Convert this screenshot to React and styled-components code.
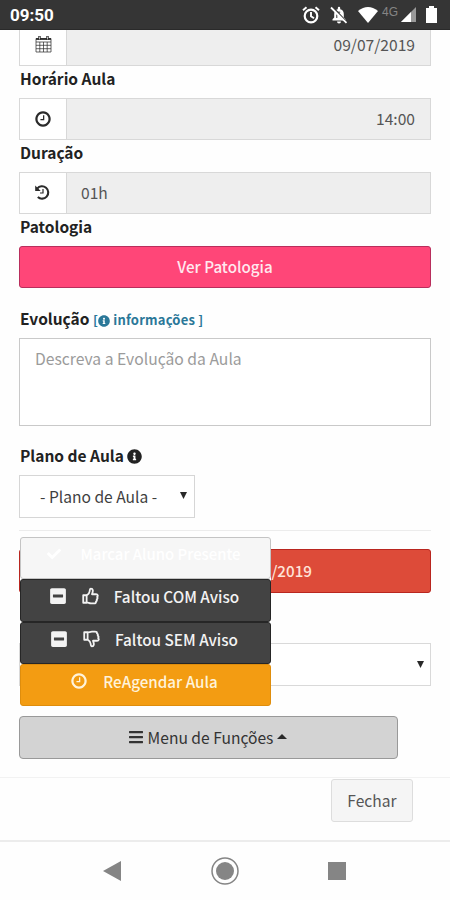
import React from 'react';
import styled, { createGlobalStyle } from 'styled-components';
import { FaBars, FaCheck, FaInfoCircle, FaMinusSquare } from 'react-icons/fa';

const GlobalStyle = createGlobalStyle`
  * { box-sizing: border-box; }
  body { margin: 0; background: #fefefe; }
  button, textarea { font: inherit; }
`;

const Screen = styled.div`
  width: 450px;
  height: 900px;
  display: flex;
  flex-direction: column;
  overflow: hidden;
  background: #fefefe;
  color: #3f3f3f;
  font: 15.6px/22px "Noto Sans CJK SC", "Open Sans", sans-serif;
`;

const StatusBar = styled.header`
  flex: none;
  height: 30px;
  padding: 0 13px 0 10px;
  display: flex;
  align-items: center;
  background: #353535;
  color: #fff;
  border-bottom: 1px solid #2a2a2a;
`;

const Clock = styled.span`
  font: 700 17px/30px Roboto, sans-serif;
`;

const StatusIcons = styled.div`
  margin-left: auto;
  display: flex;
  align-items: center;
  height: 30px;
`;

const Network = styled.span`
  width: 18px;
  margin: -5px 1px 0 4px;
  color: #858585;
  font: 12px/14px "Liberation Sans", sans-serif;
`;

const Glyph = styled.svg`
  display: block;
  flex: none;
  margin-left: ${(p) => p.$gap || 0}px;
`;

const Content = styled.main`
  flex: none;
  height: 747px;
  padding: 0 19px;
  display: flex;
  flex-direction: column;
`;

const Label = styled.div`
  flex: none;
  height: ${(p) => p.$height || 32}px;
  padding: ${(p) => p.$top || 1}px 0 0 1px;
  color: #222;
  font-weight: 700;
  font-size: 15.5px;
  white-space: nowrap;

  svg { vertical-align: -2px; }
`;

const InfoLink = styled.a`
  color: #2a7798;
  font-size: 13px;
  letter-spacing: 0.2px;
`;

const InputGroup = styled.div`
  flex: none;
  height: ${(p) => (p.$cut ? 36 : 42)}px;
  display: flex;
  border: 1px solid #d8d8d8;
  ${(p) => p.$cut && 'border-top: 0;'}
`;

const Addon = styled.div`
  width: 47px;
  padding: ${(p) => (p.$cut ? '0 0 7px' : '0 1px 1px 0')};
  display: flex;
  align-items: center;
  justify-content: center;
  border-right: 1px solid #d8d8d8;
  background: #fff;
  color: #2b2b2b;
`;

const Value = styled.div`
  flex: 1;
  padding: ${(p) => (p.$cut ? '0 15px 7px 14px' : '0 15px 2px 14px')};
  display: flex;
  align-items: center;
  justify-content: ${(p) => (p.$right ? 'flex-end' : 'flex-start')};
  background: #eee;
  color: #555;
`;

const PinkButton = styled.button`
  flex: none;
  height: 42px;
  padding: 0 0 2px;
  border: 1px solid #b82e5c;
  border-radius: 3px;
  background: #ff4678;
  color: #ffe9ef;
  font-weight: 500;
  font-size: 15.2px;
`;

const Notes = styled.textarea`
  flex: none;
  display: block;
  width: 412px;
  height: 88px;
  padding: 9px 15px;
  border: 1px solid #c9c9c9;
  outline: 0;
  resize: none;
  background: #fff;
  font-size: 15.7px;

  &::placeholder { color: #9b9b9b; opacity: 1; }
`;

const PlanSelect = styled.div`
  flex: none;
  width: 176px;
  height: 43px;
  padding: 0 7px 2px 20px;
  display: flex;
  align-items: center;
  justify-content: space-between;
  border: 1px solid #d6d6d6;
  background: #fff;
`;

const Divider = styled.hr`
  flex: none;
  width: 100%;
  height: 1px;
  margin: 12px 0 18px;
  border: 0;
  background: #ececec;
`;

const DateBanner = styled.div`
  flex: none;
  height: 44px;
  padding: 0 118px 2px 0;
  display: flex;
  align-items: center;
  justify-content: flex-end;
  border: 1px solid #b9261f;
  border-radius: 3px;
  background: #dd4b39;
  color: #ffe3d8;
  font-weight: 500;
  font-size: 15.2px;
`;

const WideSelect = styled.div`
  flex: none;
  height: 43px;
  margin-top: 50px;
  padding-right: 6px;
  display: flex;
  align-items: center;
  justify-content: flex-end;
  border: 1px solid #d9d9d9;
  background: #fff;
`;

const MenuAnchor = styled.div`
  position: relative;
  flex: none;
  width: 379px;
  margin-top: 30px;
`;

const MenuButton = styled.button`
  width: 100%;
  height: 43px;
  padding: 0 2px 2px 0;
  display: flex;
  align-items: center;
  justify-content: center;
  gap: 4px;
  border: 1px solid #999;
  border-radius: 4px;
  background: #d3d3d3;
  color: #333;
`;

const DropUp = styled.div`
  position: absolute;
  left: 1px;
  bottom: 53px;
  width: 251px;
  height: 169px;
  display: grid;
  grid-template-rows: repeat(4, 1fr);
  border-radius: 3px;
  background: #fff;
`;

const tones = {
  pale: ['#f6f6f6', '#c4c4c4', '#fff'],
  dark: ['#434343', '#262626', '#f3f3f3'],
  orange: ['#f39c12', '#df8d0c', '#fff3da'],
};

const MenuItem = styled.button`
  padding: 0 3px ${(p) => p.$lift}px 0;
  display: flex;
  align-items: center;
  justify-content: center;
  gap: ${(p) => p.$gap || 15}px;
  border: 1px solid ${(p) => tones[p.$tone][1]};
  border-radius: 3px;
  background: ${(p) => tones[p.$tone][0]};
  color: ${(p) => tones[p.$tone][2]};
  font-weight: 500;
  font-size: ${(p) => p.$size || 15.3}px;
  white-space: nowrap;
`;

const Footer = styled.footer`
  flex: none;
  height: 63px;
  padding: 1px 37px 0 0;
  display: flex;
  justify-content: flex-end;
  align-items: flex-start;
  border-top: 1px solid #f2f2f2;
`;

const CloseButton = styled.button`
  width: 82px;
  height: 43px;
  padding: 0 0 2px;
  border: 1px solid #ddd;
  border-radius: 3px;
  background: #f5f5f5;
  color: #555;
`;

const NavBar = styled.nav`
  flex: none;
  height: 60px;
  padding: 0 104px 1px 103px;
  display: flex;
  align-items: center;
  justify-content: space-between;
  border-top: 2px solid #ececec;
`;

const ClockIcon = () => (
  <Glyph width="18" height="18" viewBox="0 0 1792 1792" fill="currentColor">
    <path d="M1024 544v448q0 14-9 23t-23 9h-320q-14 0-23-9t-9-23v-64q0-14 9-23t23-9h224v-352q0-14 9-23t23-9h64q14 0 23 9t9 23zm416 352q0-148-73-273t-198-198-273-73-273 73-198 198-73 273 73 273 198 198 273 73 273-73 198-198 73-273zm224 0q0 209-103 385.5t-279.5 279.5-385.5 103-385.5-103-279.5-279.5-103-385.5 103-385.5 279.5-279.5 385.5-103 385.5 103 279.5 279.5 103 385.5z" />
  </Glyph>
);

const CalendarIcon = () => (
  <Glyph width="17" height="18" viewBox="0 0 17 18" fill="none" stroke="currentColor">
    <path d="M1 3.5h15v13.5H1zM1 7h15M1 10.3h15M1 13.7h15M4.8 7v10M8.5 7v10M12.2 7v10" strokeWidth=".9" opacity=".8" />
    <path d="M1 4h15" strokeWidth="1.8" />
    <path d="M4.5 1v4M12.5 1v4" strokeWidth="2.4" />
    <path d="M4.5 1.6v2.8M12.5 1.6v2.8" stroke="#fff" strokeWidth=".7" />
  </Glyph>
);

const HistoryIcon = () => (
  <Glyph width="17" height="17" viewBox="0 0 17 17" fill="none" stroke="currentColor">
    <path d="M3.2 4.6A6.2 6.2 0 1 1 3.8 13" strokeWidth="2.1" />
    <path d="M1.2 1.4v5.5h5.5z" fill="currentColor" stroke="none" />
    <path d="M9 5v4H6" strokeWidth="1.2" />
  </Glyph>
);

const ThumbIcon = ({ down }) => (
  <Glyph width="17" height="18" viewBox="0 0 18 18" preserveAspectRatio="none" fill="none" stroke="currentColor" strokeWidth="1.9" strokeLinejoin="round">
    <g transform={down ? 'translate(0 18) scale(1 -1)' : undefined}>
      <path d="M1.3 8.2h3.6v7.6H1.3zM4.9 8.5C7 7.2 8 5.8 8.1 4.2 8.2 2.6 8.6 1.6 9.5 1.6c2.3 0 2.5 2.5 1.1 5.6h4.3c2 0 2.3 1.7 1.1 2.7.8 1 .5 2-.4 2.5.4 1 .1 1.7-.8 2.1.2 1.4-.6 1.9-2.1 1.9H9.5c-1.8 0-2.7-.8-4.6-1" />
    </g>
  </Glyph>
);

const Caret = ({ up }) => (
  <Glyph width={up ? 10 : 7} height={up ? 5 : 7} viewBox="0 0 10 7" preserveAspectRatio="none" fill="#292929">
    <path d={up ? 'M0 7L5 0L10 7Z' : 'M0 0H10L5 7Z'} />
  </Glyph>
);

const AlarmIcon = () => (
  <Glyph width="18" height="18" viewBox="0 0 18 18" fill="none" stroke="#fff" strokeWidth="2.2">
    <circle cx="9" cy="10" r="6.3" />
    <path d="M1 4.3L4.5 1.2M17 4.3l-3.5-3.1M9 6v4.3l3 2" strokeWidth="1.9" />
  </Glyph>
);

const BellOffIcon = () => (
  <Glyph $gap={10} width="18" height="18" viewBox="0 0 18 18">
    <path d="M2.5 14.5v-1.3l1.7-1.7V8c0-2.6 1.4-4.1 3.6-4.7V2a1.2 1.2 0 0 1 2.4 0v1.3c2.2.6 3.6 2.1 3.6 4.7v3.5l1.7 1.7v1.3zM7 15.5h4a2 2 0 0 1-4 0" fill="#fff" />
    <path d="M7 6.2h3.2M6.8 8.5v3.5" stroke="#353535" />
    <path d="M2.7 1l14 15" stroke="#353535" strokeWidth="1.6" />
    <path d="M1 1.5l15.5 15.3" stroke="#fff" strokeWidth="1.8" />
  </Glyph>
);

const menuItems = [
  { label: 'Marcar Aluno Presente', tone: 'pale', lift: 8, gap: 19, size: 14.9, icons: [<FaCheck key="c" size={14} />] },
  { label: 'Faltou COM Aviso', tone: 'dark', lift: 8, icons: [<FaMinusSquare key="m" size={18} />, <ThumbIcon key="t" />] },
  { label: 'Faltou SEM Aviso', tone: 'dark', lift: 8, icons: [<FaMinusSquare key="m" size={18} />, <ThumbIcon key="t" down />] },
  { label: 'ReAgendar Aula', tone: 'orange', lift: 7, size: 15.2, icons: [<ClockIcon key="c" />] },
];

export default function App() {
  return (
    <Screen>
      <GlobalStyle />
      <StatusBar>
        <Clock>09:50</Clock>
        <StatusIcons>
          <AlarmIcon />
          <BellOffIcon />
          <Glyph $gap={10} width="20" height="16" viewBox="0 0 20 16" fill="#fff">
            <path d="M0 4Q10-4 20 4L10 16Z" />
          </Glyph>
          <Network>4G</Network>
          <Glyph width="15" height="15" viewBox="0 0 15 15">
            <path d="M0 15L15 0V15Z" fill="#999" />
            <path d="M0 15L10 5V15Z" fill="#fff" />
          </Glyph>
          <Glyph $gap={10} width="11" height="17" viewBox="0 0 11 17" fill="#fff">
            <path d="M0 2H3V0H8V2H11V17H0Z" />
          </Glyph>
        </StatusIcons>
      </StatusBar>
      <Content>
        <InputGroup $cut>
          <Addon $cut><CalendarIcon /></Addon>
          <Value $cut $right>09/07/2019</Value>
        </InputGroup>
        <Label>Horário Aula</Label>
        <InputGroup>
          <Addon><ClockIcon /></Addon>
          <Value $right>14:00</Value>
        </InputGroup>
        <Label>Duração</Label>
        <InputGroup>
          <Addon><HistoryIcon /></Addon>
          <Value>01h</Value>
        </InputGroup>
        <Label>Patologia</Label>
        <PinkButton>Ver Patologia</PinkButton>
        <Label $height={50} $top={19}>
          Evolução <InfoLink>[<FaInfoCircle size={12} /> informações ]</InfoLink>
        </Label>
        <Notes placeholder="Descreva a Evolução da Aula" />
        <Label $height={49} $top={18}>Plano de Aula <FaInfoCircle size={15} /></Label>
        <PlanSelect>- Plano de Aula -<Caret /></PlanSelect>
        <Divider />
        <DateBanner>/2019</DateBanner>
        <WideSelect><Caret /></WideSelect>
        <MenuAnchor>
          <DropUp>
            {menuItems.map((item) => (
              <MenuItem key={item.label} $tone={item.tone} $lift={item.lift} $gap={item.gap} $size={item.size}>
                {item.icons}
                <span>{item.label}</span>
              </MenuItem>
            ))}
          </DropUp>
          <MenuButton><FaBars size={16} />Menu de Funções<Caret up /></MenuButton>
        </MenuAnchor>
      </Content>
      <Footer><CloseButton>Fechar</CloseButton></Footer>
      <NavBar>
        <Glyph width="18" height="20" viewBox="0 0 18 20"><path d="M0 10L18 0V20Z" fill="#858585" /></Glyph>
        <Glyph width="28" height="28" viewBox="0 0 28 28" fill="none">
          <circle cx="14" cy="14" r="13" stroke="#858585" strokeWidth="1.5" />
          <circle cx="14" cy="14" r="9" fill="#858585" />
        </Glyph>
        <Glyph width="18" height="18" viewBox="0 0 18 18"><path d="M0 0H18V18H0Z" fill="#858585" /></Glyph>
      </NavBar>
    </Screen>
  );
}
